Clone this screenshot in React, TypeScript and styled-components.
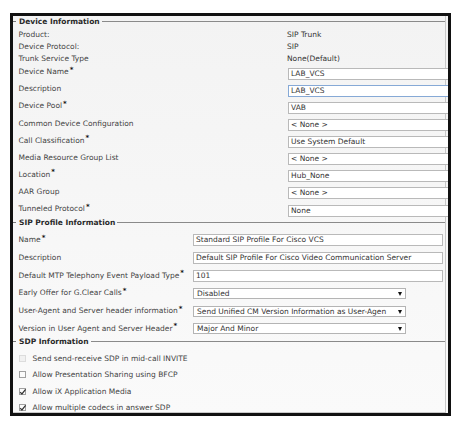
import React from 'react';
import styled, { createGlobalStyle } from 'styled-components';

const GlobalStyle = createGlobalStyle`
  html, body { margin: 0; padding: 0; background: #fff; }
  body { font-family: 'DejaVu Sans', Verdana, sans-serif; }
`;

const Frame = styled.div`
  margin: 13px 0 0 10px;
  width: 441px;
  height: 403px;
  box-sizing: border-box;
  border: 3px solid #111;
  background: linear-gradient(#f3f3f3, #fafafa);
  overflow: hidden;
  font-size: 7.5px;
  color: #444;
`;

const Panel = styled.div`
  height: 100%;
  box-sizing: border-box;
  border-right: 1px solid #c9c9c9;
  border-bottom: 1px solid #c9c9c9;
  margin-right: 2px;
`;

const Section = styled.section<{ $gap: number; $top?: number }>`
  display: flex;
  flex-direction: column;
  padding-top: ${(p) => p.$top ?? 0}px;

  & > div:nth-child(2) {
    margin-top: ${(p) => p.$gap}px;
  }
`;

const Legend = styled.div`
  display: flex;
  align-items: center;
  height: 8px;
  font-weight: bold;
  color: #2a2a2a;
  white-space: nowrap;

  &::before {
    content: '';
    width: 3px;
    height: 1px;
    margin-right: 3px;
    background: #777;
  }

  &::after {
    content: '';
    flex: 1;
    height: 1px;
    margin-left: 2px;
    background: #8a8a8a;
  }
`;

const Rows = styled.div`
  display: flex;
  flex-direction: column;
  padding-left: 5.5px;
`;

const StaticRow = styled.div`
  display: flex;
  height: 12px;
  line-height: 12px;
`;

const FieldRow = styled.div<{ $h: number; $center?: boolean }>`
  display: flex;
  align-items: ${(p) => (p.$center ? 'center' : 'flex-start')};
  height: ${(p) => p.$h}px;
  padding-top: ${(p) => (p.$center ? 0 : 3)}px;
  box-sizing: border-box;
`;

const Label = styled.div<{ $w: number; $lift?: boolean }>`
  flex: none;
  width: ${(p) => p.$w}px;
  height: 12px;
  line-height: 12px;
  margin-top: ${(p) => (p.$lift ? -1.5 : 0)}px;
  white-space: nowrap;
`;

const Value = styled.div`
  color: #333;
  padding-left: 0.5px;
`;

const Star = styled.span`
  position: relative;
  top: -2.5px;
  margin-left: 1px;
  font-weight: bold;
  font-size: 7px;
  line-height: 0;
  color: #111;
`;

const TextBox = styled.div<{ $w: number; $focus?: boolean }>`
  flex: none;
  width: ${(p) => p.$w}px;
  height: 12px;
  line-height: 10px;
  box-sizing: border-box;
  padding-left: 2px;
  background: #fff;
  border: 1px solid ${(p) => (p.$focus ? '#86a9d6' : '#b9b9b9')};
  color: #333;
  white-space: nowrap;
  overflow: hidden;
`;

const Select = styled.div<{ $w: number }>`
  flex: none;
  position: relative;
  width: ${(p) => p.$w}px;
  height: 11px;
  line-height: 9px;
  box-sizing: border-box;
  padding-left: 3px;
  background: #fff;
  border: 1px solid #b4b4b4;
  color: #333;
  white-space: nowrap;
  overflow: hidden;

  &::after {
    content: '';
    position: absolute;
    right: 3px;
    top: 3px;
    border-left: 2.5px solid transparent;
    border-right: 2.5px solid transparent;
    border-top: 4px solid #111;
  }
`;

const CheckRow = styled.div`
  display: flex;
  align-items: center;
  height: 16.3px;
`;

const Box = styled.span<{ $disabled?: boolean }>`
  position: relative;
  flex: none;
  width: 7px;
  height: 7px;
  box-sizing: border-box;
  margin: 0 7px 0 0;
  border: 1px solid ${(p) => (p.$disabled ? '#dcdcdc' : '#a0a0a0')};
  background: ${(p) => (p.$disabled ? '#f1f1f1' : '#fbfbfb')};

  svg {
    position: absolute;
    left: -0.5px;
    top: -1px;
  }
`;

const deviceStatic = [
  ['Product:', 'SIP Trunk'],
  ['Device Protocol:', 'SIP'],
  ['Trunk Service Type', 'None(Default)'],
];

const deviceFields: [string, boolean, string, boolean?][] = [
  ['Device Name', true, 'LAB_VCS'],
  ['Description', false, 'LAB_VCS', true],
  ['Device Pool', true, 'VAB'],
  ['Common Device Configuration', false, '< None >'],
  ['Call Classification', true, 'Use System Default'],
  ['Media Resource Group List', false, '< None >'],
  ['Location', true, 'Hub_None'],
  ['AAR Group', false, '< None >'],
  ['Tunneled Protocol', true, 'None'],
];

const sipText = [
  ['Name', true, 'Standard SIP Profile For Cisco VCS'],
  ['Description', false, 'Default SIP Profile For Cisco Video Communication Server'],
  ['Default MTP Telephony Event Payload Type', true, '101'],
] as const;

const sipSelect = [
  ['Early Offer for G.Clear Calls', 'Disabled'],
  ['User-Agent and Server header information', 'Send Unified CM Version Information as User-Agen'],
  ['Version in User Agent and Server Header', 'Major And Minor'],
];

const sdp = [
  { text: 'Send send-receive SDP in mid-call INVITE', checked: false, disabled: true },
  { text: 'Allow Presentation Sharing using BFCP', checked: false },
  { text: 'Allow iX Application Media', checked: true },
  { text: 'Allow multiple codecs in answer SDP', checked: true },
];

const Check = () => (
  <svg width="8" height="8" viewBox="0 0 8 8">
    <path d="M1.2 4.2 L2.9 6 L6.6 1.4" fill="none" stroke="#333" strokeWidth="1.2" />
  </svg>
);

const App = () => (
  <>
    <GlobalStyle />
    <Frame>
      <Panel>
        <Section $gap={3.8} $top={1}>
          <Legend>Device Information</Legend>
          <Rows>
            {deviceStatic.map(([l, v]) => (
              <StaticRow key={l}>
                <Label $w={268}>{l}</Label>
                <Value>{v}</Value>
              </StaticRow>
            ))}
            {deviceFields.map(([l, req, v, focus]) => (
              <FieldRow key={l} $h={17.1}>
                <Label $w={269.5} $lift>
                  {l}
                  {req && <Star>*</Star>}
                </Label>
                <TextBox $w={175} $focus={focus}>
                  {v}
                </TextBox>
              </FieldRow>
            ))}
          </Rows>
        </Section>
        <Section $gap={4.8}>
          <Legend>SIP Profile Information</Legend>
          <Rows>
            {sipText.map(([l, req, v]) => (
              <FieldRow key={l} $h={17.7} $center>
                <Label $w={174.5}>
                  {l}
                  {req && <Star>*</Star>}
                </Label>
                <TextBox $w={250}>{v}</TextBox>
              </FieldRow>
            ))}
            {sipSelect.map(([l, v]) => (
              <FieldRow key={l} $h={17.7} $center>
                <Label $w={174.5}>
                  {l}
                  <Star>*</Star>
                </Label>
                <Select $w={213}>{v}</Select>
              </FieldRow>
            ))}
          </Rows>
        </Section>
        <Section $gap={4.9}>
          <Legend>SDP Information</Legend>
          <Rows>
            {sdp.map((c) => (
              <CheckRow key={c.text}>
                <Box $disabled={c.disabled}>{c.checked && <Check />}</Box>
                {c.text}
              </CheckRow>
            ))}
          </Rows>
        </Section>
      </Panel>
    </Frame>
  </>
);

export default App;
